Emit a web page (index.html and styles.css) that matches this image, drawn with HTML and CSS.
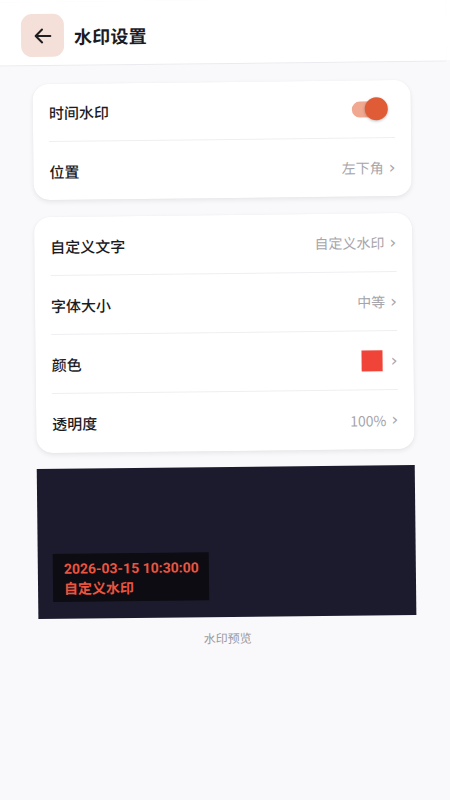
FILE: index.html
```html
<!DOCTYPE html>
<html lang="zh">
<head>
<meta charset="utf-8">
<link rel="stylesheet" href="styles.css">
</head>
<body>
<div class="screen">
  <header class="topbar">
    <div class="back">
      <svg width="22" height="22" viewBox="0 0 24 24" fill="none" stroke="#1f1f1f" stroke-width="2.2" stroke-linecap="round" stroke-linejoin="round"><path d="M20 12H4.5"/><path d="M11 5l-7 7 7 7"/></svg>
    </div>
    <h1 class="title">水印设置</h1>
  </header>
  <main class="content">
    <section class="card">
      <div class="row">
        <span class="label">时间水印</span>
        <span class="toggle"><span class="track"></span><span class="thumb"></span></span>
      </div>
      <div class="row">
        <span class="label">位置</span>
        <span class="value">左下角<span class="chev">›</span></span>
      </div>
    </section>
    <section class="card">
      <div class="row">
        <span class="label">自定义文字</span>
        <span class="value">自定义水印<span class="chev">›</span></span>
      </div>
      <div class="row">
        <span class="label">字体大小</span>
        <span class="value">中等<span class="chev">›</span></span>
      </div>
      <div class="row">
        <span class="label">颜色</span>
        <span class="value"><span class="swatch"></span><span class="chev">›</span></span>
      </div>
      <div class="row">
        <span class="label">透明度</span>
        <span class="value">100%<span class="chev">›</span></span>
      </div>
    </section>
    <section class="preview">
      <div class="stamp">
        <div class="stamp-time">2026-03-15 10:30:00</div>
        <div class="stamp-text">自定义水印</div>
      </div>
    </section>
    <p class="caption">水印预览</p>
  </main>
</div>
</body>
</html>
```
FILE: styles.css
```css
* { box-sizing: border-box; }
html {
  margin: 0;
  padding: 0;
  background: linear-gradient(#ffffff 0, #ffffff 60px, #f9f8fb 60px);
}
body {
  margin: 0;
  padding: 0;
  width: 450px;
  height: 800px;
  overflow: hidden;
  font-family: "Noto Sans CJK SC", "Noto Sans", sans-serif;
  color: #1c1b1f;
}
.screen {
  width: 450px;
  height: 800px;
  background: #f9f8fb;
  transform: rotate(-0.63deg);
  transform-origin: 225px 400px;
}
.topbar {
  height: 64px;
  background: #ffffff;
  border-bottom: 1px solid #ebeaee;
  display: flex;
  align-items: center;
  padding: 4px 0 0 25px;
  gap: 10px;
}
.back {
  width: 43px;
  height: 43px;
  border-radius: 11px;
  background: #f4e0d8;
  display: flex;
  align-items: center;
  justify-content: center;
}
.title {
  margin: 0;
  font-size: 18px;
  font-weight: 600;
  letter-spacing: 0.2px;
}
.content {
  padding: 18px 36px 0 36px;
  display: flex;
  flex-direction: column;
}
.card {
  background: #ffffff;
  border-radius: 16px;
  box-shadow: 0 2px 5px rgba(0,0,0,0.08), 0 0 1px rgba(0,0,0,0.06);
  padding: 0 16px;
  margin-bottom: 17px;
}
.card + .card { margin-bottom: 16px; }
.row {
  height: 58px;
  display: flex;
  align-items: center;
  justify-content: space-between;
  border-bottom: 1px solid #efeef1;
}
.card .row:last-child { border-bottom: none; }
.card:nth-of-type(2) .row { height: 59px; }
.label {
  font-size: 15px;
  font-weight: 500;
  color: #1c1b1f;
}
.value {
  font-size: 14px;
  color: #a6a5aa;
  display: flex;
  align-items: center;
}
.chev {
  font-family: "DejaVu Sans", sans-serif;
  font-size: 17px;
  line-height: 1;
  margin-left: 5px;
  color: #a6a5aa;
}
.swatch {
  width: 21px;
  height: 21px;
  background: #f04438;
  margin-right: 3px;
}
.toggle {
  position: relative;
  width: 36px;
  height: 24px;
  margin-right: 7px;
}
.track {
  position: absolute;
  left: 0;
  top: 4px;
  width: 32px;
  height: 16px;
  border-radius: 8px;
  background: #f0a890;
}
.thumb {
  position: absolute;
  right: 0;
  top: 0;
  width: 23px;
  height: 23px;
  border-radius: 50%;
  background: #e05c36;
  box-shadow: 0 1px 3px rgba(0,0,0,0.25);
}
.preview {
  height: 150px;
  background: #1b1b2d;
  display: flex;
  align-items: flex-end;
  padding: 0 0 17px 15px;
}
.stamp {
  background: #0c0c12;
  padding: 5px 11px 4px 11px;
  width: 156px;
  font-weight: 700;
  color: #ea5540;
  white-space: nowrap;
}
.stamp-time {
  font-family: Roboto, "Noto Sans", sans-serif;
  font-size: 14px;
  line-height: 20px;
}
.stamp-text {
  font-size: 14px;
  line-height: 19px;
}
.caption {
  text-align: center;
  margin: 12px 0 0 0;
  font-size: 12px;
  color: #9b9a9f;
}
```
